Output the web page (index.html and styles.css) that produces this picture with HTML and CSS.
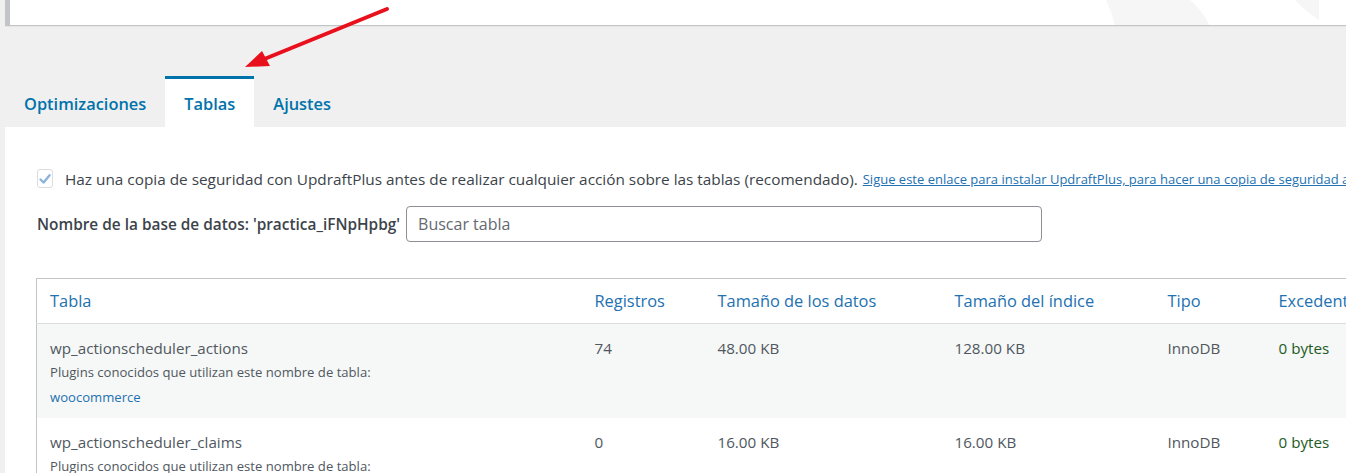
FILE: index.html
```html
<!DOCTYPE html>
<html lang="es">
<head>
    <meta charset="UTF-8">
    <title>WP-Optimize - Tablas</title>
    <link rel="stylesheet" href="styles.css">
</head>
<body>
    <div class="notice">
        <svg class="notice-mark" width="240" height="26" viewBox="0 0 240 26">
            <path d="M0 0 H84 Q96 10 104 26 H9 Q6 12 0 0 Z" fill="#f6f6f7"/>
            <path d="M189 0 H213 V20 Q198 10 189 0 Z" fill="#f6f6f7"/>
        </svg>
    </div>

    <!-- Tabs -->
    <nav class="tabs">
        <a class="tab">Optimizaciones</a>
        <a class="tab active">Tablas</a>
        <a class="tab">Ajustes</a>
    </nav>

    <div class="panel">
        <div class="backup-row">
            <span class="checkbox">
                <svg width="14" height="14" viewBox="0 0 14 14"><path d="M2.5 7.5 L5.6 10.5 L11.6 3.2" fill="none" stroke="#8db4df" stroke-width="2.4" stroke-linecap="round" stroke-linejoin="round"/></svg>
            </span>
            <span class="backup-text">Haz una copia de seguridad con UpdraftPlus antes de realizar cualquier acción sobre las tablas (recomendado).</span>
            <a class="backup-link" href="#">Sigue este enlace para instalar UpdraftPlus, para hacer una copia de seguridad antes de realizar cualquier acción.</a>
        </div>

        <div class="db-row">
            <label class="db-name">Nombre de la base de datos: 'practica_iFNpHpbg'</label>
            <input class="search" type="text" placeholder="Buscar tabla">
        </div>

        <table class="tables">
            <colgroup>
                <col class="c-name">
                <col class="c-rows">
                <col class="c-data">
                <col class="c-index">
                <col class="c-type">
                <col class="c-over">
            </colgroup>
            <thead>
                <tr>
                    <th>Tabla</th>
                    <th>Registros</th>
                    <th>Tamaño de los datos</th>
                    <th>Tamaño del índice</th>
                    <th>Tipo</th>
                    <th>Excedente</th>
                </tr>
            </thead>
            <tbody>
                <tr class="alt">
                    <td>
                        wp_actionscheduler_actions
                        <div class="note">Plugins conocidos que utilizan este nombre de tabla:</div>
                        <div class="note"><a href="#">woocommerce</a></div>
                    </td>
                    <td>74</td>
                    <td>48.00 KB</td>
                    <td>128.00 KB</td>
                    <td>InnoDB</td>
                    <td class="ok">0 bytes</td>
                </tr>
                <tr>
                    <td>
                        wp_actionscheduler_claims
                        <div class="note">Plugins conocidos que utilizan este nombre de tabla:</div>
                        <div class="note"><a href="#">woocommerce</a></div>
                    </td>
                    <td>0</td>
                    <td>16.00 KB</td>
                    <td>16.00 KB</td>
                    <td>InnoDB</td>
                    <td class="ok">0 bytes</td>
                </tr>
            </tbody>
        </table>
    </div>

    <!-- Arrow pointing at the active tab -->
    <svg class="arrow" width="400" height="80" viewBox="0 0 400 80">
        <line x1="387" y1="9" x2="262" y2="60" stroke="#e8101c" stroke-width="4" stroke-linecap="round"/>
        <polygon points="245,67 262,51 270,66" fill="#e8101c"/>
    </svg>
</body>
</html>
```

FILE: styles.css
```css
body {
    margin: 0;
    background-color: #f0f0f1;
    font-family: "Open Sans", "Noto Sans", sans-serif;
    color: #3c434a;
    overflow: hidden;
    position: relative;
}
a {
    color: #2271b1;
}

/* Notice box at the top */
.notice {
    position: relative;
    height: 25px;
    margin-left: 5px;
    background-color: #fff;
    border-left: 5px solid #c3c4c7;
    border-bottom: 1px solid #c3c4c7;
    box-shadow: 0 1px 1px rgba(0,0,0,0.04);
    overflow: hidden;
}
.notice-mark {
    position: absolute;
    top: 0;
    right: 0;
}

/* Tabs */
.tabs {
    display: flex;
    margin: 50px 0 0 5px;
}
.tab {
    display: flex;
    align-items: center;
    height: 48px;
    padding: 0 19px;
    border-top: 3px solid transparent;
    color: #0073aa;
    font-size: 16.4px;
    font-weight: 600;
    cursor: pointer;
}
.tab.active {
    background-color: #fff;
    border-top-color: #0073aa;
}

.panel {
    margin-left: 5px;
    padding: 42px 0 0 31px;
    background-color: #fff;
    height: 400px;
}

.backup-row {
    display: flex;
    align-items: center;
    white-space: nowrap;
    height: 19px;
}
.checkbox {
    display: flex;
    align-items: center;
    justify-content: center;
    width: 17px;
    height: 17px;
    margin-left: 1px;
    border: 1px solid #dcdcde;
    border-radius: 3px;
    background-color: #fff;
}
.backup-text {
    margin-left: 12px;
    font-size: 15.35px;
}
.backup-link {
    margin-left: 5px;
    font-size: 13px;
}

.db-row {
    display: flex;
    align-items: center;
    margin-top: 18px;
}
.db-name {
    margin-left: 1px;
    font-size: 15.4px;
    font-weight: 600;
}
.search {
    width: 636px;
    height: 36px;
    box-sizing: border-box;
    margin-left: 6px;
    padding: 0 11px;
    border: 1px solid #8c8f94;
    border-radius: 4px;
    font-family: inherit;
    font-size: 16px;
    color: #2c3338;
}
.search::placeholder {
    color: #646970;
}

/* Tables list */
.tables {
    margin-top: 36px;
    width: 1500px;
    table-layout: fixed;
    border-collapse: collapse;
    border: 1px solid #c3c4c7;
}
.c-name { width: 545px; }
.c-rows { width: 123px; }
.c-data { width: 237px; }
.c-index { width: 213px; }
.c-type { width: 111px; }
.tables th {
    text-align: left;
    font-weight: 400;
    font-size: 16.4px;
    line-height: 21px;
    color: #2271b1;
    padding: 11px 14px 12px 13px;
    border-bottom: 1px solid #dcdcde;
    white-space: nowrap;
}
.tables td {
    vertical-align: top;
    padding: 12px 14px 8px 13px;
    font-size: 15.2px;
    line-height: 24px;
    color: #50575e;
}
.tables tr.alt td {
    background-color: #f6f7f7;
}
.tables .note {
    font-size: 13.1px;
    line-height: 25px;
    color: #50575e;
}
.tables .note a {
    text-decoration: none;
}
.tables td.ok {
    color: #1d5b24;
}

.arrow {
    position: absolute;
    top: 0;
    left: 0;
}
```
